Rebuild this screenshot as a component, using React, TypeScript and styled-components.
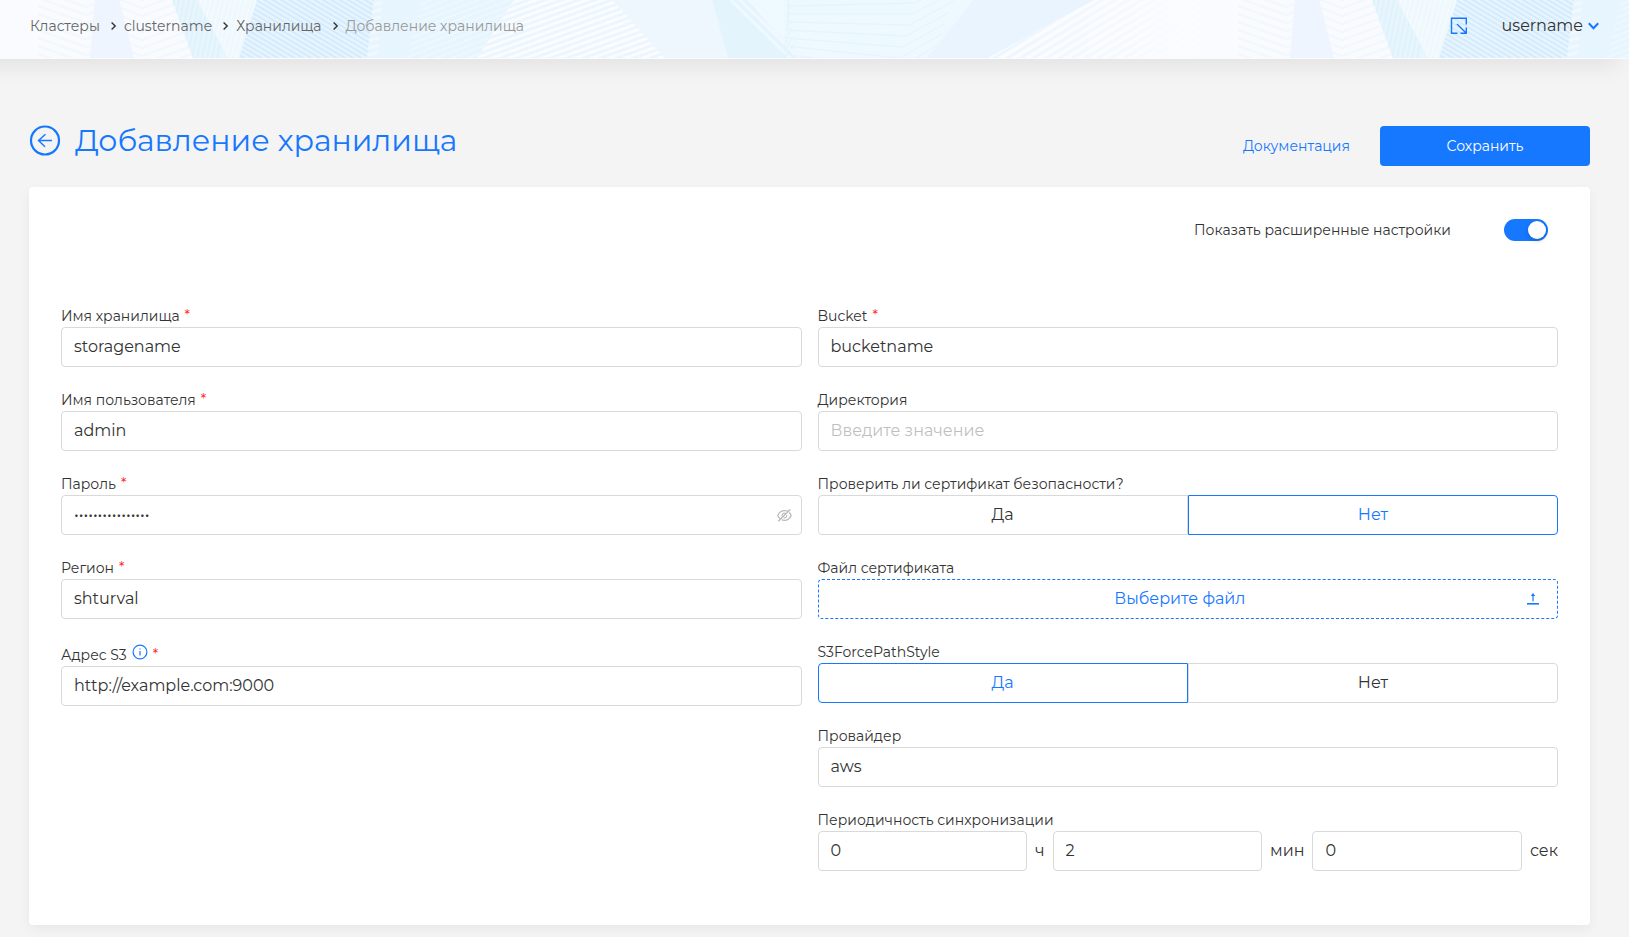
import React, { useState } from "react";
import styled, { createGlobalStyle, css } from "styled-components";
import { AiOutlineEyeInvisible } from "react-icons/ai";

const blue = "#1677ff";
const ink = "#333333";
const line = "#d9d9d9";

const GlobalStyle = createGlobalStyle`
  *, *::before, *::after { box-sizing: border-box; }
  body {
    margin: 0;
    background: #f4f4f4;
    color: ${ink};
    font-family: Montserrat, Inter, "Noto Sans", sans-serif;
    font-size: 14px;
    line-height: 22px;
  }
  button, input { font: inherit; color: inherit; }
  a { text-decoration: none; }
`;

/* ---------- header ---------- */

const Header = styled.header`
  position: relative;
  display: flex;
  align-items: center;
  justify-content: space-between;
  height: 59px;
  padding: 0 30px 8px;
  background: #f9fbff;
  box-shadow: -14px 4px 20px 4px rgba(0, 0, 0, 0.07);
`;

const HeaderArt = styled.svg`
  position: absolute;
  inset: 0;
  width: 100%;
  height: 58px;
`;

const Crumbs = styled.nav`
  position: relative;
  ol {
    display: flex;
    align-items: center;
    gap: 7px;
    margin: 0;
    padding: 0;
    list-style: none;
  }
  li {
    display: flex;
    align-items: center;
    gap: 11px;
  }
`;

const CrumbLink = styled.a<{ $current?: boolean }>`
  color: ${(p) => (p.$current ? "#999999" : "#666666")};
`;

const HeaderTools = styled.div`
  position: relative;
  display: flex;
  align-items: center;
  gap: 34px;
`;

const PlainButton = styled.button`
  display: flex;
  align-items: center;
  gap: 5px;
  padding: 0;
  border: 0;
  background: none;
  font-size: 16px;
  cursor: pointer;
`;

/* ---------- page head ---------- */

const Main = styled.main`
  padding: 62px 39px 12px 29px;
`;

const PageHead = styled.div`
  display: flex;
  align-items: flex-start;
  justify-content: space-between;
  padding-bottom: 21px;
`;

const TitleGroup = styled.div`
  display: flex;
  align-items: center;
  gap: 14px;
  height: 40px;
`;

const BackLink = styled.a`
  display: flex;
  color: ${blue};
`;

const Title = styled.h1`
  margin: 0;
  color: ${blue};
  font-size: 30px;
  font-weight: 400;
  line-height: 40px;
`;

const Actions = styled.div`
  display: flex;
  align-items: center;
  gap: 30px;
  padding-top: 5px;
`;

const DocLink = styled.a`
  color: ${blue};
`;

const SaveButton = styled.button`
  width: 210px;
  height: 40px;
  border: 0;
  border-radius: 4px;
  background: ${blue};
  color: #ffffff;
  cursor: pointer;
`;

/* ---------- form card ---------- */

const Card = styled.form`
  padding: 32px 32px 54px;
  border-radius: 4px;
  background: #ffffff;
  box-shadow: 0 4px 12px rgba(0, 0, 0, 0.05);
`;

const AdvancedRow = styled.label`
  display: flex;
  align-items: center;
  justify-content: flex-end;
  gap: 53px;
  padding-right: 10px;
  margin-bottom: 64px;
`;

const Switch = styled.input`
  appearance: none;
  display: flex;
  align-items: center;
  width: 44px;
  height: 22px;
  margin: 0;
  padding: 2px;
  border-radius: 11px;
  background: #bfbfbf;
  cursor: pointer;
  &::before {
    content: "";
    width: 18px;
    height: 18px;
    border-radius: 9px;
    background: #ffffff;
    box-shadow: 0 2px 4px rgba(0, 35, 11, 0.2);
  }
  &:checked {
    justify-content: flex-end;
    background: ${blue};
  }
`;

const Columns = styled.div`
  display: grid;
  grid-template-columns: minmax(0, 1fr) minmax(0, 1fr);
  gap: 16px;
`;

const Column = styled.div`
  display: flex;
  flex-direction: column;
  gap: 22px;
`;

const FieldBox = styled.div`
  min-width: 0;
`;

const GroupBox = styled.fieldset`
  min-width: 0;
  margin: 0;
  padding: 0;
  border: 0;
`;

const labelText = css`
  display: flex;
  gap: 5px;
  padding: 0;
  line-height: 22px;
`;

const Label = styled.label`
  ${labelText}
`;

const Legend = styled.legend`
  ${labelText}
`;

const HintLabel = styled(Label)`
  padding-top: 3px;
`;

const Star = styled.span`
  color: #ff1f1f;
  line-height: 20px;
`;

const TextInput = styled.input`
  display: block;
  width: 100%;
  min-width: 0;
  height: 40px;
  padding: 0 12px 2px;
  border: 1px solid ${line};
  border-radius: 4px;
  background: #ffffff;
  font-size: 16px;
  outline: none;
  &::placeholder { color: #bfbfbf; opacity: 1; }
  &:focus { border-color: ${blue}; }
`;

const PasswordFrame = styled.div`
  display: flex;
  align-items: center;
  height: 40px;
  padding: 0 8px 0 12px;
  border: 1px solid ${line};
  border-radius: 4px;
`;

const PasswordInput = styled.input`
  flex: 1;
  min-width: 0;
  padding: 0;
  border: 0;
  outline: none;
  background: none;
  font-size: 16px;
`;

const EyeButton = styled.button`
  display: flex;
  padding: 0;
  border: 0;
  background: none;
  color: #b8b8b8;
  cursor: pointer;
`;

const Segments = styled.div`
  display: flex;
  height: 40px;
`;

const Segment = styled.label<{ $on: boolean; $side: "left" | "right" }>`
  display: flex;
  flex: 1;
  align-items: center;
  justify-content: center;
  border: 1px solid ${(p) => (p.$on ? blue : line)};
  border-radius: ${(p) => (p.$side === "left" ? "4px 0 0 4px" : "0 4px 4px 0")};
  color: ${(p) => (p.$on ? blue : ink)};
  font-size: 16px;
  cursor: pointer;
  input {
    appearance: none;
    width: 0;
    height: 0;
    margin: 0;
  }
`;

const FileButton = styled.button`
  display: flex;
  align-items: center;
  width: 100%;
  height: 40px;
  padding: 0 17px 0 15px;
  border: 1px dashed ${blue};
  border-radius: 4px;
  background: #ffffff;
  color: ${blue};
  font-size: 16px;
  cursor: pointer;
  span { flex: 1; }
`;

const Period = styled.div`
  display: flex;
  align-items: center;
  gap: 8px;
  font-size: 16px;
`;

/* ---------- drawings ---------- */

const range = (n: number) => Array.from({ length: n }, (_, i) => i);

function HeaderPattern() {
  return (
    <HeaderArt aria-hidden="true">
      <defs>
        <clipPath id="steep"><path d="M172 0H201L228 58H193Z" /></clipPath>
        <clipPath id="pale"><path d="M197 0H257L239 58H228Z" /></clipPath>
        <clipPath id="dense"><path d="M257 0H374L367 58H239Z" /></clipPath>
        <clipPath id="notch"><path d="M374 0H383L377 58H367Z" /></clipPath>
        <clipPath id="rise1"><path d="M421 0H514L477 58H407Z" /></clipPath>
        <clipPath id="rise2"><path d="M514 0H613L665 58H477Z" /></clipPath>
        <clipPath id="hex"><path d="M727 0H974L927 58H788Z" /></clipPath>
        <clipPath id="rise3"><path d="M1094 0H1200V58H988Z" /></clipPath>
        <linearGradient id="fade" x1="988" x2="1180" y1="0" y2="0" gradientUnits="userSpaceOnUse">
          <stop offset="0" stopColor="#ebf6fd" />
          <stop offset="1" stopColor="#f9fbff" />
        </linearGradient>
        <pattern id="art" width="1200" height="58" patternUnits="userSpaceOnUse">
          <rect width="1200" height="58" fill="#f9fbff" />
          <g stroke="#f1f8fe" strokeWidth="2" fill="none">
            {range(13).map((i) => (
              <path key={i} d={`M38 ${i * 8 - 34}L86 ${i * 8 - 17}L96 ${i * 8 - 20}M116 ${i * 8 - 26}L142 ${i * 8 - 16}L192 ${i * 8 - 34}`} />
            ))}
          </g>
          <path d="M95 0H119L134 58H90Z" fill="#eef5ff" />
          <path d="M172 0H201L228 58H193Z" fill="#e7f5fd" />
          <g clipPath="url(#steep)" stroke="#e0f2fc" strokeWidth="2">
            {range(14).map((i) => <path key={i} d={`M${164 + i * 5} 0l-12 58`} />)}
          </g>
          <path d="M197 0H257L239 58H228Z" fill="#eff8fd" />
          <g clipPath="url(#pale)" stroke="#fafdff" strokeWidth="1">
            {range(18).map((i) => <path key={i} d={`M${196 + i * 5} 0l-15 58`} />)}
          </g>
          <path d="M257 0H374L367 58H239Z" fill="#e6f5fe" />
          <g clipPath="url(#dense)" stroke="#d5ebfd" strokeWidth="2">
            {range(32).map((i) => <path key={i} d={`M236 ${i * 5 - 92}l144 86`} />)}
          </g>
          <path d="M374 0H514L477 58H367Z" fill="#e7f5fe" />
          <g clipPath="url(#notch)" stroke="#f1f9fe" strokeWidth="3">
            {range(10).map((i) => <path key={i} d={`M364 ${i * 7}l24 -6`} />)}
          </g>
          <g clipPath="url(#rise1)" stroke="#eef8fe" strokeWidth="2">
            {range(18).map((i) => <path key={i} d={`M400 ${i * 6}l120 -46`} />)}
          </g>
          <path d="M514 0H613L665 58H477Z" fill="#ecf6fd" />
          <g clipPath="url(#rise2)" stroke="#fafcff" strokeWidth="3">
            {range(24).map((i) => <path key={i} d={`M470 ${i * 6}l200 -72`} />)}
          </g>
          <path d="M613 0H712L728 58H665Z" fill="#eef7fe" />
          <path d="M712 0H974L927 58H728Z" fill="#e4f4fd" />
          <path d="M806 0H974L927 58H800L770 27L748 0Z" fill="#edf8ff" />
          <g clipPath="url(#hex)" fill="none">
            {range(6).map((i) => (
              <path key={i} d={`M${729 + i * 9} -2L${792 + i * 9} 60`} stroke="#eff9ff" strokeWidth="3" />
            ))}
            {range(9).map((i) => (
              <path
                key={i}
                d={`M${786 + i} ${i * 8 - 20}L${790 - i} ${i * 8 - 2}L${918 - i * 3} ${i * 11 - 8}L${966 - i * 4} ${i * 11 - 32}`}
                stroke="#e4f4fd"
                strokeWidth="1"
              />
            ))}
          </g>
          <path d="M974 0H1094L988 58H927Z" fill="#e9f4fe" />
          <path d="M1094 0H1200V58H988Z" fill="url(#fade)" />
          <g clipPath="url(#rise3)" stroke="#fafcff" strokeWidth="4">
            {range(16).map((i) => <path key={i} d={`M${975 + i * 13} 66l124 -76`} />)}
          </g>
        </pattern>
      </defs>
      <rect width="100%" height="58" fill="url(#art)" />
    </HeaderArt>
  );
}

const CrumbArrow = () => (
  <svg width="6" height="10" viewBox="0 0 6 10" fill="none" stroke={ink} strokeWidth="1.4" aria-hidden="true">
    <path d="M0.6 1.4l3.6 3.6-3.6 3.6" />
  </svg>
);

const ExpandIcon = () => (
  <svg width="18" height="18" viewBox="0 0 18 18" fill="none" stroke={blue} strokeWidth="1.4" aria-hidden="true">
    <path d="M7.5 16.2H1.5V1.2H16.3V7.6M7 7l9 9M16.3 10.4v5.8h-5.8" />
  </svg>
);

const DownIcon = () => (
  <svg width="11" height="8" viewBox="0 0 11 8" fill="none" stroke={blue} strokeWidth="2" aria-hidden="true">
    <path d="M0.8 1.2l4.7 5 4.7-5" />
  </svg>
);

const BackIcon = () => (
  <svg width="32" height="32" viewBox="0 0 32 32" fill="none" stroke="currentColor" aria-hidden="true">
    <circle cx="16" cy="15.5" r="14" strokeWidth="2.2" />
    <path d="M23 15.5H9.5M16.5 9.3L9.5 15.5l6.5 6.2" strokeWidth="1.4" />
  </svg>
);

const InfoIcon = () => (
  <svg width="16" height="16" viewBox="0 0 16 16" fill="none" stroke={blue} aria-hidden="true">
    <circle cx="8" cy="8" r="6.9" strokeWidth="1.2" />
    <path d="M8 7v4.5M8 4.4v1.2" strokeWidth="1.2" />
  </svg>
);

const UploadIcon = () => (
  <svg width="14" height="14" viewBox="0 0 14 14" aria-hidden="true">
    <path d="M7 1L9.2 4H7.6V9.2H6.4V4H4.8Z" fill={blue} />
    <path d="M1 11.8h12" stroke={blue} strokeWidth="1.6" />
  </svg>
);

/* ---------- form parts ---------- */

type FieldProps = {
  id: string;
  label: string;
  value?: string;
  placeholder?: string;
  required?: boolean;
};

function Field({ id, label, value, placeholder, required }: FieldProps) {
  return (
    <FieldBox>
      <Label htmlFor={id}>
        {label}
        {required && <Star>*</Star>}
      </Label>
      <TextInput id={id} defaultValue={value} placeholder={placeholder} />
    </FieldBox>
  );
}

function YesNo({ name, label, initial }: { name: string; label: string; initial: boolean }) {
  const [yes, setYes] = useState(initial);
  return (
    <GroupBox>
      <Legend>{label}</Legend>
      <Segments>
        <Segment $on={yes} $side="left">
          <input type="radio" name={name} checked={yes} onChange={() => setYes(true)} />
          Да
        </Segment>
        <Segment $on={!yes} $side="right">
          <input type="radio" name={name} checked={!yes} onChange={() => setYes(false)} />
          Нет
        </Segment>
      </Segments>
    </GroupBox>
  );
}

export default function App() {
  const [hidden, setHidden] = useState(true);
  return (
    <>
      <GlobalStyle />
      <Header>
        <HeaderPattern />
        <Crumbs aria-label="Навигация">
          <ol>
            <li><CrumbLink href="#clusters">Кластеры</CrumbLink><CrumbArrow /></li>
            <li><CrumbLink href="#cluster">clustername</CrumbLink><CrumbArrow /></li>
            <li><CrumbLink href="#storages">Хранилища</CrumbLink><CrumbArrow /></li>
            <li><CrumbLink href="#add" $current aria-current="page">Добавление хранилища</CrumbLink></li>
          </ol>
        </Crumbs>
        <HeaderTools>
          <PlainButton type="button" aria-label="Развернуть"><ExpandIcon /></PlainButton>
          <PlainButton type="button">username<DownIcon /></PlainButton>
        </HeaderTools>
      </Header>
      <Main>
        <PageHead>
          <TitleGroup>
            <BackLink href="#storages" aria-label="Назад"><BackIcon /></BackLink>
            <Title>Добавление хранилища</Title>
          </TitleGroup>
          <Actions>
            <DocLink href="#docs">Документация</DocLink>
            <SaveButton type="submit" form="storage">Сохранить</SaveButton>
          </Actions>
        </PageHead>
        <Card id="storage" onSubmit={(e) => e.preventDefault()}>
          <AdvancedRow>
            Показать расширенные настройки
            <Switch type="checkbox" role="switch" defaultChecked />
          </AdvancedRow>
          <Columns>
            <Column>
              <Field id="name" label="Имя хранилища" value="storagename" required />
              <Field id="user" label="Имя пользователя" value="admin" required />
              <FieldBox>
                <Label htmlFor="password">Пароль<Star>*</Star></Label>
                <PasswordFrame>
                  <PasswordInput id="password" type={hidden ? "password" : "text"} defaultValue="storage-password" />
                  <EyeButton type="button" aria-label="Показать пароль" onClick={() => setHidden(!hidden)}>
                    <AiOutlineEyeInvisible size={17} />
                  </EyeButton>
                </PasswordFrame>
              </FieldBox>
              <Field id="region" label="Регион" value="shturval" required />
              <FieldBox>
                <HintLabel htmlFor="address">Адрес S3<InfoIcon /><Star>*</Star></HintLabel>
                <TextInput id="address" defaultValue="http://example.com:9000" />
              </FieldBox>
            </Column>
            <Column>
              <Field id="bucket" label="Bucket" value="bucketname" required />
              <Field id="directory" label="Директория" placeholder="Введите значение" />
              <YesNo name="verify" label="Проверить ли сертификат безопасности?" initial={false} />
              <FieldBox>
                <Label htmlFor="certificate">Файл сертификата</Label>
                <FileButton id="certificate" type="button"><span>Выберите файл</span><UploadIcon /></FileButton>
              </FieldBox>
              <YesNo name="path-style" label="S3ForcePathStyle" initial />
              <Field id="provider" label="Провайдер" value="aws" />
              <GroupBox>
                <Legend>Периодичность синхронизации</Legend>
                <Period>
                  <TextInput id="hours" defaultValue="0" aria-label="Часы" />
                  <label htmlFor="hours">ч</label>
                  <TextInput id="minutes" defaultValue="2" aria-label="Минуты" />
                  <label htmlFor="minutes">мин</label>
                  <TextInput id="seconds" defaultValue="0" aria-label="Секунды" />
                  <label htmlFor="seconds">сек</label>
                </Period>
              </GroupBox>
            </Column>
          </Columns>
        </Card>
      </Main>
    </>
  );
}
